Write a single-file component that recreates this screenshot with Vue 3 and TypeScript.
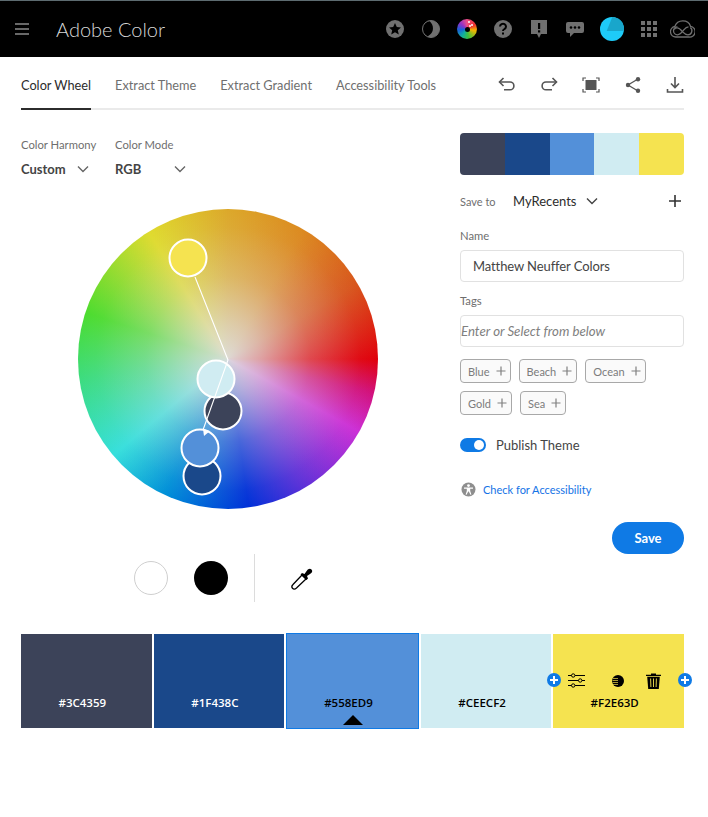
<script setup lang="ts">
interface Marker { x: number; y: number; color: string }
interface Swatch { hex: string; color: string; dark: boolean; active?: boolean }

const tabs: string[] = ['Color Wheel', 'Extract Theme', 'Extract Gradient', 'Accessibility Tools']
const tags: string[] = ['Blue', 'Beach', 'Ocean', 'Gold', 'Sea']
const markers: Marker[] = [
  { x: 124, y: 267, color: '#1A488A' },
  { x: 122, y: 239, color: '#5390D9' },
  { x: 145, y: 202, color: '#3C4359' },
  { x: 138, y: 170, color: '#D0ECF2' },
  { x: 110, y: 49, color: '#F5E350' },
]
const swatches: Swatch[] = [
  { hex: '#3C4359', color: '#3C4359', dark: true },
  { hex: '#1F438C', color: '#1A488A', dark: true },
  { hex: '#558ED9', color: '#5390D9', dark: false, active: true },
  { hex: '#CEECF2', color: '#D0ECF2', dark: false },
  { hex: '#F2E63D', color: '#F5E350', dark: false },
]
const grid: number[][] = [0, 1, 2].flatMap((r) => [0, 1, 2].map((c) => [c * 6 + 1, r * 6 + 1]))
</script>

<template>
  <div class="page">
    <header class="topbar">
      <svg class="burger" width="14" height="12" viewBox="0 0 14 12">
        <path d="M0 1h14M0 6h14M0 11h14" stroke="#8a8a8a" stroke-width="1.6" />
      </svg>
      <span class="brand">Adobe Color</span>
      <div class="top-icons">
        <span class="slot">
          <svg width="20" height="20" viewBox="0 0 20 20">
            <circle cx="10" cy="10" r="9" fill="#707070" />
            <path d="M10 4l1.8 4 4.2.4-3.2 2.8 1 4.200-3.800-2.200-3.800 2.200 1-4.200L4 8.400l4.200-.4z" fill="#000" />
          </svg>
        </span>
        <span class="slot">
          <svg width="20" height="20" viewBox="0 0 20 20">
            <circle cx="10" cy="10" r="8.500" fill="#707070" />
            <path d="M8.500 2C13 6 14 13.500 6.500 17.500A8 8 0 0 1 8.500 2z" fill="#000" />
            <circle cx="10" cy="10" r="8.500" fill="none" stroke="#707070" />
          </svg>
        </span>
        <span class="slot">
          <span class="rainbow">
            <i class="pupil"></i>
            <i class="spark spark-a"></i>
            <i class="spark spark-b"></i>
            <i class="spark spark-c"></i>
          </span>
        </span>
        <span class="slot">
          <svg width="20" height="20" viewBox="0 0 20 20">
            <circle cx="10" cy="10" r="9" fill="#707070" />
            <path d="M7 7.500a3 2.800 0 1 1 4.500 2.500c-1 .6-1.500 1-1.500 2" fill="none" stroke="#000" stroke-width="2" />
            <rect x="9" y="13.500" width="2" height="2" fill="#000" />
          </svg>
        </span>
        <span class="slot">
          <svg width="20" height="22" viewBox="0 0 20 22">
            <path d="M2 2h16v14h-6l-2 4-2-4H2z" fill="#707070" />
            <rect x="9" y="5" width="2.200" height="6" fill="#000" />
            <rect x="9" y="12.300" width="2.200" height="2.200" fill="#000" />
          </svg>
        </span>
        <span class="slot">
          <svg width="20" height="20" viewBox="0 0 20 20">
            <path d="M3 3h14a2 2 0 0 1 2 2v7a2 2 0 0 1-2 2H9l-4 4v-4H3a2 2 0 0 1-2-2V5a2 2 0 0 1 2-2z" fill="#707070" />
            <circle cx="6" cy="8.500" r="1.300" fill="#000" />
            <circle cx="10" cy="8.500" r="1.300" fill="#000" />
            <circle cx="14" cy="8.500" r="1.300" fill="#000" />
          </svg>
        </span>
        <span class="slot slot-avatar">
          <svg width="24" height="24" viewBox="0 0 24 24">
            <circle cx="12" cy="12" r="12" fill="#1ecbf8" />
            <path d="M12.300 0L6.700 14h17.200A12 12 0 0 0 12.300 0z" fill="#19a6cb" />
          </svg>
        </span>
        <span class="slot slot-grid">
          <svg width="16" height="16" viewBox="0 0 16 16">
            <rect v-for="(g, i) in grid" :key="i" :x="g[0] - 1" :y="g[1] - 1" width="4" height="4" fill="#707070" />
          </svg>
        </span>
        <span class="slot slot-cc">
          <svg width="25" height="18" viewBox="0 0 25 18" fill="none" stroke="#707070" stroke-width="1.300">
            <path d="M6 17a5.300 5.300 0 0 1-1.200-10.500C6 3 9 .8 12.800.8c3.800 0 6.800 2.300 7.700 5.500A5.400 5.400 0 0 1 19 17z" />
            <path d="M7.500 6.800a4 4 0 1 0 0 8c2.700 0 4.700-2.800 6.300-4.900 1.400-1.800 2.800-3.100 4.700-3.100" />
            <path d="M4.300 9.500a3.200 3.200 0 0 1 3-1.600c2.300 0 3.800 2.200 5.600 4.200 1.400 1.500 2.800 2.700 5 2.700a4 4 0 0 0 2.400-7.200" />
          </svg>
        </span>
      </div>
    </header>

    <nav class="tabbar">
      <a v-for="(t, i) in tabs" :key="t" class="tab" :class="{ current: i === 0 }">{{ t }}</a>
      <div class="tools">
        <svg width="18" height="16" viewBox="0 0 18 16" fill="none" stroke="#555" stroke-width="1.600">
          <path d="M1.500 5H12a3.800 3.800 0 0 1 0 7.800H6" />
          <path d="M5.500 1L1.500 5l4 4" />
        </svg>
        <svg width="18" height="16" viewBox="0 0 18 16" fill="none" stroke="#555" stroke-width="1.600">
          <path d="M16.500 5H6a3.800 3.800 0 0 0 0 7.800h6" />
          <path d="M12.500 1l4 4-4 4" />
        </svg>
        <svg width="18" height="16" viewBox="0 0 18 16" fill="none" stroke="#555" stroke-width="1.200">
          <path d="M1 4V1h3M14 1h3v3M17 12v3h-3M4 15H1v-3" />
          <rect x="3.500" y="3" width="11" height="10" fill="#555" stroke="none" />
        </svg>
        <svg width="18" height="16" viewBox="0 0 18 16">
          <path d="M14 2L4 8l10 6" fill="none" stroke="#555" stroke-width="1.300" />
          <circle cx="14" cy="2.200" r="2.200" fill="#555" />
          <circle cx="4" cy="8" r="2.200" fill="#555" />
          <circle cx="14" cy="13.800" r="2.200" fill="#555" />
        </svg>
        <svg width="18" height="16" viewBox="0 0 18 16" fill="none" stroke="#555" stroke-width="1.600">
          <path d="M9 0v9.500M5 6.500l4 4 4-4" />
          <path d="M1.500 12v3h15v-3" />
        </svg>
      </div>
    </nav>

    <main class="columns">
      <section class="left">
        <div class="selects">
          <div class="select harmony">
            <span class="caption">Color Harmony</span>
            <span class="value">
              Custom
              <svg width="12" height="8" viewBox="0 0 12 8"><path d="M1 1.500l5 5 5-5" fill="none" stroke="#666" stroke-width="1.400" /></svg>
            </span>
          </div>
          <div class="select mode">
            <span class="caption">Color Mode</span>
            <span class="value">
              RGB
              <svg width="12" height="8" viewBox="0 0 12 8"><path d="M1 1.500l5 5 5-5" fill="none" stroke="#666" stroke-width="1.400" /></svg>
            </span>
          </div>
        </div>

        <div class="wheel">
          <svg class="wheel-marks" width="300" height="300" viewBox="0 0 300 300">
            <circle
              v-for="m in markers"
              :key="m.color"
              :cx="m.x"
              :cy="m.y"
              r="18.500"
              :fill="m.color"
              stroke="#fff"
              stroke-width="2"
            />
            <path d="M117 68l33 83-25 70" fill="none" stroke="#fff" stroke-width="1.100" />
            <path d="M125 220l7 2-6 5z" fill="#fff" />
          </svg>
        </div>

        <div class="wheel-tools">
          <span class="dot white"></span>
          <span class="dot black"></span>
          <span class="rule"></span>
          <svg class="dropper" width="24" height="24" viewBox="0 0 24 24">
            <path d="M12 9l4 4-9.500 9c-1.500 1.300-3 1.300-4 .2S1.500 20 3 18.500z" fill="#fff" stroke="#000" stroke-width="1.300" />
            <path d="M10.500 8.500L12 7l2.500 1L17 4.500c1-1.500 3-2.500 4.500-1s.5 3.500-1.500 4.500L17 10l1 2.500-1.500 1.500z" fill="#000" />
          </svg>
        </div>
      </section>

      <aside class="right">
        <div class="mini">
          <i v-for="s in swatches" :key="s.hex" :style="{ background: s.color }"></i>
        </div>

        <div class="saveto">
          <span class="saveto-label">Save to</span>
          <span class="saveto-lib">MyRecents</span>
          <svg width="12" height="8" viewBox="0 0 12 8"><path d="M1 1.500l5 5 5-5" fill="none" stroke="#444" stroke-width="1.400" /></svg>
          <svg class="saveto-add" width="14" height="14" viewBox="0 0 14 14"><path d="M7 1v12M1 7h12" stroke="#333" stroke-width="1.600" /></svg>
        </div>

        <label class="field-label name-label">Name</label>
        <div class="field name-field">Matthew Neuffer Colors</div>
        <label class="field-label tags-label">Tags</label>
        <div class="field tags-field">Enter or Select from below</div>

        <div class="tags">
          <span v-for="t in tags" :key="t" class="tag">
            {{ t }}
            <svg width="10" height="10" viewBox="0 0 10 10"><path d="M5 .5v9M.5 5h9" stroke="#808080" stroke-width="1.200" /></svg>
          </span>
        </div>

        <div class="publish">
          <span class="toggle"><i></i></span>
          <span>Publish Theme</span>
        </div>

        <div class="a11y">
          <svg width="15" height="15" viewBox="0 0 15 15">
            <circle cx="7.500" cy="7.500" r="7" fill="#8e8e8e" />
            <circle cx="7.500" cy="3.600" r="1.400" fill="#fff" />
            <path d="M3 5.600h9v1.100H9.200v2.200l1.200 3.500-1 .3-1.600-3.200h-.6l-1.600 3.200-1-.3 1.200-3.500V6.700H3z" fill="#fff" />
          </svg>
          <span>Check for Accessibility</span>
        </div>

        <div class="save-row"><button class="save" type="button">Save</button></div>
      </aside>
    </main>

    <section class="strip">
      <div
        v-for="s in swatches"
        :key="s.hex"
        class="swatch"
        :class="{ active: s.active, light: !s.dark }"
        :style="{ background: s.color }"
      >
        <span class="hex">{{ s.hex }}</span>
        <i v-if="s.active" class="caret"></i>
      </div>
      <div class="overlay">
        <svg class="plus plus-left" width="14" height="14" viewBox="0 0 14 14">
          <circle cx="7" cy="7" r="7" fill="#0f7ae5" />
          <path d="M7 3v8M3 7h8" stroke="#fff" stroke-width="2" />
        </svg>
        <svg class="ov-sliders" width="17" height="15" viewBox="0 0 17 15" fill="none" stroke="#000" stroke-width="1">
          <path d="M0 2.500h3.500M7 2.500h10M0 7.500h10.500M14 7.500h3M0 12.500h3.500M7 12.500h10" />
          <circle cx="5.200" cy="2.500" r="1.700" />
          <circle cx="12.200" cy="7.500" r="1.700" />
          <circle cx="5.200" cy="12.500" r="1.700" />
        </svg>
        <svg class="ov-contrast" width="12" height="12" viewBox="0 0 12 12">
          <circle cx="6" cy="6" r="6" fill="#000" />
          <path d="M1 3.500h5M.5 5.500h5.500M.5 7.500h5.500M1 9.500h5" stroke="#b9aa3a" stroke-width=".9" />
        </svg>
        <svg class="ov-trash" width="15" height="16" viewBox="0 0 15 16">
          <path d="M5 1.800V.6h5v1.200h5V3H0V1.800z" fill="#000" />
          <path d="M1.200 3.800h12.600L12.800 16H2.200z" fill="#000" />
          <path d="M4.600 5.500l.3 8.500M7.500 5.500V14M10.400 5.500l-.3 8.500" stroke="#f5e350" stroke-width=".9" />
        </svg>
        <svg class="plus plus-right" width="14" height="14" viewBox="0 0 14 14">
          <circle cx="7" cy="7" r="7" fill="#0f7ae5" />
          <path d="M7 3v8M3 7h8" stroke="#fff" stroke-width="2" />
        </svg>
      </div>
    </section>
  </div>
</template>

<style scoped>
.page {
  width: 708px;
  min-height: 817px;
  overflow: hidden;
  position: relative;
  background: #fff;
  font-family: Lato, "Open Sans", sans-serif;
  color: #4b4b4b;
}
.topbar {
  height: 56px;
  border-top: 1px solid #5d6b70;
  background: #000;
  display: flex;
  align-items: center;
  padding-left: 15px;
}
.burger { margin-right: 27px; }
.brand {
  font-size: 20px;
  font-weight: 300;
  color: #d8d8d8;
}
.top-icons {
  margin-left: auto;
  margin-right: 8px;
  display: flex;
  align-items: center;
}
.slot {
  width: 36px;
  height: 28px;
  display: flex;
  align-items: center;
  justify-content: center;
}
.slot-avatar { margin-left: 1px; }
.slot-grid { margin-left: 1px; }
.slot-cc { margin-left: -3px; }
.rainbow {
  position: relative;
  width: 20px;
  height: 20px;
  border-radius: 50%;
  display: flex;
  align-items: center;
  justify-content: center;
  background: conic-gradient(#ee4f88, #ee3030 60deg, #f4b400 100deg, #3dc13c 170deg, #10b0a0 215deg, #1a60d8 265deg, #9030c8 310deg, #ee4f88);
}
.pupil {
  width: 5px;
  height: 5px;
  border-radius: 50%;
  background: #000;
}
.spark {
  position: absolute;
  width: 2px;
  height: 2px;
  border-radius: 50%;
  background: #fff;
}
.spark-a { left: 11px; top: 2px; }
.spark-b { left: 14px; top: 5px; }
.spark-c { left: 12px; top: 6px; }
.tabbar {
  position: relative;
  margin: 0 24px 0 21px;
  height: 51px;
  display: flex;
  gap: 24px;
  border-bottom: 2px solid #eaeaea;
}
.tab {
  height: 51px;
  line-height: 56px;
  font-size: 12.750px;
  color: #6f6f6f;
  white-space: nowrap;
}
.tab.current {
  color: #2c2c2c;
  border-bottom: 2px solid #2c2c2c;
}
.tools {
  margin-left: auto;
  display: flex;
  align-items: center;
  gap: 24px;
  height: 56px;
}
.columns {
  display: flex;
  padding: 23px 24px 0 21px;
  height: 494px;
  box-sizing: border-box;
}
.left { width: 439px; }
.selects { display: flex; height: 76px; }
.select {
  display: flex;
  flex-direction: column;
  gap: 8px;
  padding-top: 4px;
}
.harmony { width: 94px; }
.mode { width: 71px; }
.caption {
  font-size: 11.250px;
  line-height: 15px;
  color: #6e6e6e;
}
.value {
  display: flex;
  align-items: center;
  justify-content: space-between;
  font-size: 13px;
  line-height: 18px;
  font-weight: 700;
  color: #444;
}
.harmony .value { width: 68px; }
.wheel {
  position: relative;
  width: 300px;
  height: 300px;
  margin: 0 0 0 57px;
  border-radius: 50%;
  background:
    radial-gradient(circle closest-side, rgba(222, 222, 222, 0.95) 0%, rgba(222, 222, 222, 0.72) 22%, rgba(222, 222, 222, 0.32) 55%, rgba(222, 222, 222, 0.05) 88%, rgba(222, 222, 222, 0) 100%),
    conic-gradient(#dca82a 0deg, #dc8a20 30deg, #d8551c 60deg, #e0000a 90deg, #d2107a 103deg, #cc2fd6 119deg, #5a30d8 150deg, #0030d8 172deg, #0090d8 205deg, #35dfdc 230deg, #3cdc80 262deg, #4cdc2e 288deg, #dfdb2e 328deg, #dca82a 360deg);
}
.wheel-marks {
  position: absolute;
  left: 0;
  top: 0;
}
.wheel-tools {
  display: flex;
  align-items: center;
  height: 48px;
  margin-top: 45px;
  padding-left: 113px;
}
.dot {
  width: 34px;
  height: 34px;
  border-radius: 50%;
  box-sizing: border-box;
}
.dot.white {
  border: 1px solid #cfcfcf;
  background: #fff;
}
.dot.black {
  margin-left: 26px;
  background: #000;
}
.rule {
  width: 1px;
  height: 48px;
  margin-left: 26px;
  background: #dcdcdc;
}
.dropper { margin-left: 35px; }
.right {
  width: 224px;
  display: flex;
  flex-direction: column;
}
.mini {
  display: flex;
  height: 42px;
  border-radius: 4px;
  overflow: hidden;
}
.mini i { flex: 1; }
.saveto {
  display: flex;
  align-items: center;
  height: 20px;
  margin-top: 16px;
}
.saveto-label {
  width: 53px;
  font-size: 11px;
  color: #707070;
}
.saveto-lib {
  font-size: 13px;
  color: #2c2c2c;
  margin-right: 10px;
}
.saveto-add { margin-left: auto; margin-right: 2px; }
.field-label {
  font-size: 11.250px;
  line-height: 15px;
  color: #6e6e6e;
}
.name-label { margin-top: 17px; }
.tags-label { margin-top: 11px; }
.field {
  height: 32px;
  box-sizing: border-box;
  border: 1px solid #e1e1e1;
  border-radius: 4px;
  display: flex;
  align-items: center;
  font-size: 13px;
  margin-top: 7px;
}
.name-field { padding-left: 12px; color: #444; letter-spacing: -0.1px; }
.tags-field {
  padding-left: 0;
  font-style: italic;
  font-size: 13.250px;
  color: #808080;
}
.tags {
  display: flex;
  flex-wrap: wrap;
  gap: 8px;
  margin-top: 12px;
  width: 200px;
}
.tag {
  display: flex;
  align-items: center;
  gap: 6px;
  height: 24px;
  box-sizing: border-box;
  padding: 0 4px 0 7px;
  border: 1px solid #a8a8a8;
  border-radius: 4px;
  background: #fafafa;
  font-size: 11px;
  color: #7c7c7c;
}
.publish {
  display: flex;
  align-items: center;
  gap: 10px;
  height: 18px;
  margin-top: 21px;
  font-size: 13px;
  color: #444;
}
.toggle {
  width: 26px;
  height: 14px;
  border-radius: 7px;
  background: #0f7ae5;
  display: flex;
  align-items: center;
  justify-content: flex-end;
  padding-right: 2px;
  box-sizing: border-box;
}
.toggle i {
  width: 10px;
  height: 10px;
  border-radius: 50%;
  background: #fff;
}
.a11y {
  display: flex;
  align-items: center;
  gap: 7px;
  margin-top: 25px;
  height: 20px;
  font-size: 11px;
  color: #1473e6;
  padding-left: 1px;
}
.save-row {
  display: flex;
  justify-content: flex-end;
  margin-top: 23px;
}
.save {
  width: 72px;
  height: 32px;
  border: 0;
  border-radius: 16px;
  background: #0f7ae5;
  color: #fff;
  font-family: inherit;
  font-size: 13px;
  font-weight: 700;
}
.strip {
  position: relative;
  display: flex;
  gap: 2px;
  height: 94px;
  margin: 30px 24px 0 21px;
}
.swatch {
  position: relative;
  flex: 1;
  box-sizing: border-box;
  display: flex;
  justify-content: center;
  padding-right: 8px;
  color: #fff;
}
.swatch.light { color: #000; }
.swatch.active {
  margin: -1px 0;
  height: 96px;
  border: 1px solid #0f7ae5;
}
.hex {
  font-family: "Open Sans", sans-serif;
  font-size: 11.500px;
  font-weight: 600;
  line-height: 16px;
  margin-top: 61px;
}
.caret {
  position: absolute;
  left: 56px;
  bottom: 3px;
  width: 0;
  height: 0;
  border-left: 10px solid transparent;
  border-right: 10px solid transparent;
  border-bottom: 10px solid #000;
}
.overlay {
  position: absolute;
  inset: 0;
  pointer-events: none;
}
.plus, .ov-sliders, .ov-contrast, .ov-trash { position: absolute; }
.plus { top: 39px; }
.plus-left { left: 526px; }
.plus-right { left: 657px; }
.ov-sliders { left: 547px; top: 39px; }
.ov-contrast { left: 591px; top: 41px; }
.ov-trash { left: 625px; top: 39px; }
</style>
